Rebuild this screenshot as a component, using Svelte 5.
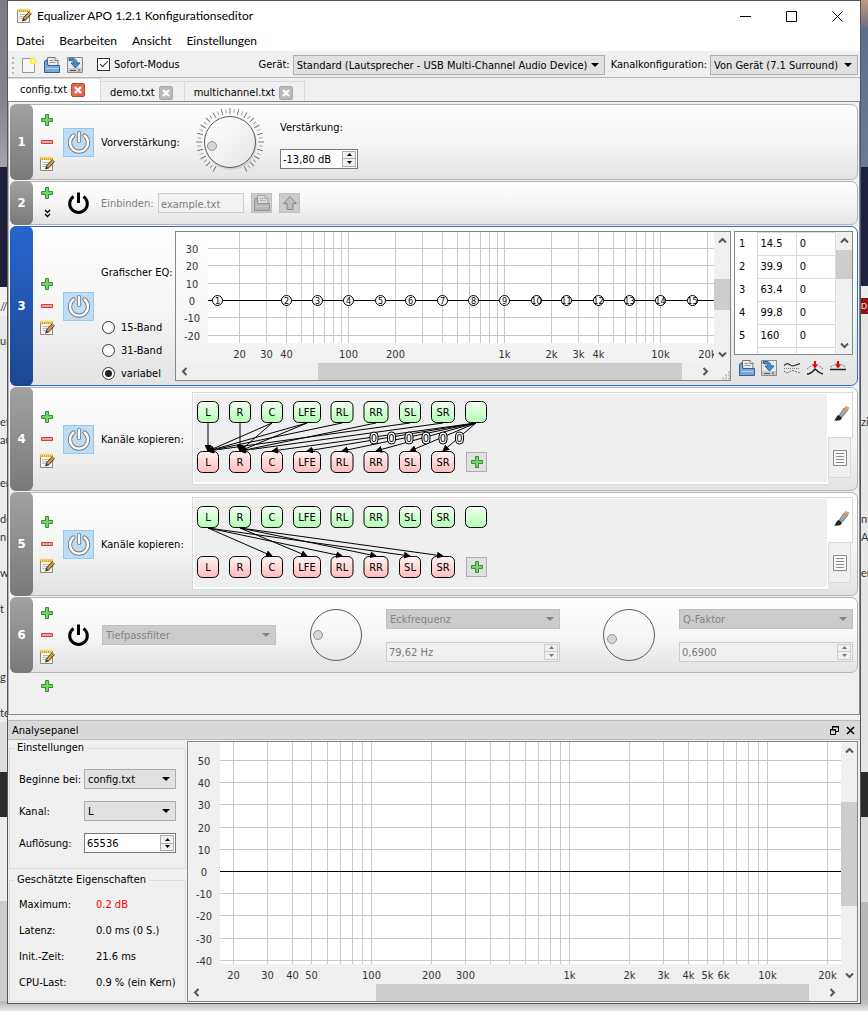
<script>
  const leftStrip = [
    { h: 167, bg: 'linear-gradient(#7c7a84, #85838d 60%, #a4a4ac)' },
    { h: 120, bg: '#1f2039' },
    { h: 11, bg: '#f1f1f1' },
    { h: 18, bg: '#f1f1f1', text: '//' },
    { h: 16, bg: '#e8e8e8' },
    { h: 18, bg: '#e8e8e8', text: 'ur' },
    { h: 63, bg: '#ececec' },
    { h: 18, bg: '#ececec', text: 'ef' },
    { h: 18, bg: '#ececec', text: 'au' },
    { h: 25, bg: '#ececec' },
    { h: 18, bg: '#ececec', text: 'er' },
    { h: 18, bg: '#ececec' },
    { h: 18, bg: '#ececec', text: 'de' },
    { h: 18, bg: '#ececec', text: 'n s' },
    { h: 18, bg: '#ececec' },
    { h: 18, bg: '#ececec', text: 'w' },
    { h: 18, bg: '#ececec' },
    { h: 18, bg: '#ececec', text: 't s' },
    { h: 50, bg: '#ececec' },
    { h: 18, bg: '#ececec', text: 'g b' },
    { h: 18, bg: '#ececec' },
    { h: 18, bg: '#ececec', text: 'te' },
    { h: 50, bg: '#dedede' },
    { h: 45, bg: '#2b2b2b' },
    { h: 84, bg: '#ececec' },
    { h: 100, bg: '#cdcdcd' },
  ];

  const rightStrip = [
    { h: 28, bg: 'linear-gradient(#c09a80, #6b6f86)' },
    { h: 139, bg: 'linear-gradient(#5b6f8c, #6a7c93)' },
    { h: 119, bg: '#1f2140' },
    { h: 12, bg: '#ececec' },
    { h: 16, bg: '#8c1414', text: 'D', light: true },
    { h: 99, bg: '#e6e6e6' },
    { h: 18, bg: '#e8e8e8', text: 'zi' },
    { h: 79, bg: '#e8e8e8' },
    { h: 18, bg: '#e8e8e8', text: 'nt' },
    { h: 18, bg: '#e8e8e8', text: 'A' },
    { h: 18, bg: '#e8e8e8' },
    { h: 18, bg: '#e8e8e8', text: 'ere' },
    { h: 190, bg: '#e4e4e4' },
    { h: 45, bg: '#2b2b2b' },
    { h: 85, bg: '#dadada' },
    { h: 98, bg: '#b9b9b9' },
  ];

  const menus = ['Datei', 'Bearbeiten', 'Ansicht', 'Einstellungen'];
  const tabs = ['config.txt', 'demo.txt', 'multichannel.txt'];
  let activeTab = 'config.txt';
  let instantMode = true;
  let bandMode = 'variabel';

  const bands = [14.5, 39.9, 63.4, 99.8, 160, 250, 400, 630, 1000, 1600, 2500, 4000, 6300, 10000, 16000];

  const eqChart = {
    x100: 172,
    decade: 156,
    zero: 68,
    perTen: 17.4,
    plotHeight: 111,
    height: 131,
    levels: [30, 20, 10, 0, -10, -20],
    labels: [20, 30, 40, 100, 200, 1000, 2000, 3000, 4000, 10000, 20000],
  };

  const analysisChart = {
    x100: 183,
    decade: 198,
    zero: 129,
    perTen: 22.2,
    plotHeight: 222,
    height: 242,
    levels: [50, 40, 30, 20, 10, 0, -10, -20, -30, -40],
    labels: [20, 30, 40, 50, 100, 200, 300, 1000, 2000, 3000, 4000, 5000, 6000, 10000, 20000],
  };

  const gridFrequencies = [10, 100, 1000, 10000]
    .flatMap((base) => [1, 2, 3, 4, 5, 6, 7, 8, 9].map((n) => n * base))
    .filter((f) => f >= 20 && f <= 20000);

  function freqX(chart, f) {
    return Math.round(chart.x100 + chart.decade * Math.log10(f / 100)) + 0.5;
  }

  function levelY(chart, level) {
    return Math.round(chart.zero - (level / 10) * chart.perTen) + 0.5;
  }

  function freqLabel(f) {
    return f >= 1000 ? `${f / 1000}k` : `${f}`;
  }

  const channels = [
    { name: 'L', x: 14, w: 22 },
    { name: 'R', x: 46, w: 22 },
    { name: 'C', x: 78, w: 22 },
    { name: 'LFE', x: 113, w: 28 },
    { name: 'RL', x: 148, w: 23 },
    { name: 'RR', x: 182, w: 25 },
    { name: 'SL', x: 216, w: 22 },
    { name: 'SR', x: 249, w: 24 },
    { name: '', x: 282, w: 22 },
  ];

  // pairs of [source, target] indexes into channels
  const downmix = [
    [0, 0], [1, 1], [2, 0], [2, 1], [3, 0], [3, 1], [4, 0], [5, 1], [6, 0], [7, 1],
    [8, 2], [8, 3], [8, 4], [8, 5], [8, 6], [8, 7],
  ];
  const upmix = [[0, 2], [0, 4], [0, 6], [1, 3], [1, 5], [1, 7]];

  const ticks = Array.from({ length: 41 }, (_, i) => ({ angle: i * 7.5 - 150, long: i % 2 === 0 }));

  const properties = [
    { label: 'Maximum:', value: '0.2 dB', alert: true },
    { label: 'Latenz:', value: '0.0 ms (0 S.)' },
    { label: 'Init.-Zeit:', value: '21.6 ms' },
    { label: 'CPU-Last:', value: '0.9 % (ein Kern)' },
  ];
</script>

{#snippet plusIcon()}
  <svg width="12" height="12" viewBox="0 0 12 12">
    <path d="M4.500 .5h3v4h4v3h-4v4h-3v-4h-4v-3h4z" fill="#7ccf6c" stroke="#2d932d" />
  </svg>
{/snippet}

{#snippet minusIcon()}
  <svg width="12" height="12" viewBox="0 0 12 12">
    <path d="M.5 4.500h11v3h-11z" fill="#ee9f98" stroke="#c4453f" />
  </svg>
{/snippet}

{#snippet editIcon()}
  <svg width="16" height="16" viewBox="0 0 16 16">
    <path d="M1.500 3.500h12v11h-12z" fill="#f6f4ee" stroke="#8b8b85" />
    <path d="M1 1.500h13v2.500h-13z" fill="#d8ab25" />
    <path d="M2.500 .5v3M4.500 .5v3M6.500 .5v3M8.500 .5v3M10.500 .5v3M12.500 .5v3" stroke="#f5df6a" />
    <path d="M3.500 6.500h8M3.500 8.500h6M3.500 10.500h4" stroke="#bcbcb8" />
    <path d="M14.500 4.500l-6.500 7" stroke="#4b2f12" stroke-width="3.600" />
    <path d="M14.500 4.500l-6 6.500" stroke="#d9a052" stroke-width="2" />
    <path d="M6 13.500l1-3 2.200 2z" fill="#2b2b2b" />
  </svg>
{/snippet}

{#snippet openIcon(muted)}
  <svg width="18" height="16" viewBox="0 0 18 16" class:muted>
    <path d="M4.500 12V.5h7.500l3 3V12" fill="#ececec" stroke="#777" />
    <path d="M6.500 3.500h4M6.500 5.500h6" stroke="#999" />
    <path d="M12 .5v3h3" fill="#fff" stroke="#777" />
    <path d="M1.500 15.500V4.500l1-1.500h1.500l1 5.500h11.500v7z" fill="#79a8d6" stroke="#33618f" />
    <path d="M3 11.500h12.500" stroke="#b4d3ee" />
  </svg>
{/snippet}

{#snippet saveIcon()}
  <svg width="16" height="16" viewBox="0 0 16 16">
    <path d="M.5 .5h15v15h-15z" fill="#e9e9e9" stroke="#8b8b8b" />
    <path d="M1 11h14v4h-14z" fill="#c9c9c9" />
    <path d="M3 13.500h6M12 12v2.500" stroke="#555" />
    <path d="M2 1.500c4-.5 8 .5 8 4.500h3l-4.500 5-4.500-5h3c0-2-2-2.500-5-2.500z" fill="#4f8fc6" stroke="#235e92" />
  </svg>
{/snippet}

{#snippet closeBadge()}
  <svg width="14" height="14" viewBox="0 0 14 14">
    <rect class="badge" x=".5" y=".5" width="13" height="13" rx="1.500" />
    <path d="M4 4l6 6M10 4l-6 6" stroke="#fff" stroke-width="2.400" />
  </svg>
{/snippet}

{#snippet power(on)}
  <button class="power" class:on aria-label="Filter ein/aus" aria-pressed={on}>
    <svg width="24" height="24" viewBox="0 0 24 24" fill="none" stroke-linecap={on ? 'round' : 'butt'}>
      {#if on}
        <path d="M6.500 5.500a9 9 0 1 0 11 0M12 3v8" stroke="#6d7780" stroke-width="4.200" />
        <path d="M6.500 5.500a9 9 0 1 0 11 0M12 3v8" stroke="#fff" stroke-width="2.400" />
      {:else}
        <path d="M6.500 5.500a8.800 8.800 0 1 0 10 0M11.500 1.500v10.500" stroke="#000" stroke-width="3" />
      {/if}
    </svg>
  </button>
{/snippet}

{#snippet tools()}
  <div class="tools">
    <button aria-label="Filter hinzufügen">{@render plusIcon()}</button>
    <button aria-label="Filter entfernen">{@render minusIcon()}</button>
    <button aria-label="Als Text bearbeiten">{@render editIcon()}</button>
  </div>
{/snippet}

{#snippet combo(text, label, kind, disabled)}
  <span class="combo {kind}" class:disabled>
    <select aria-label={label} {disabled}><option>{text}</option></select>
    <svg width="8" height="4" viewBox="0 0 8 4"><path d="M0 0h8l-4 4z" fill="currentColor" /></svg>
  </span>
{/snippet}

{#snippet spin(text, label, kind, disabled)}
  <span class="spin {kind}" class:disabled>
    <input type="text" value={text} aria-label={label} {disabled} />
    <span class="steps">
      <button aria-label="{label} erhöhen" {disabled}><svg width="5" height="3" viewBox="0 0 5 3"><path d="M2.500 0L5 3H0z" fill="currentColor" /></svg></button>
      <button aria-label="{label} verringern" {disabled}><svg width="5" height="3" viewBox="0 0 5 3"><path d="M2.500 3L5 0H0z" fill="currentColor" /></svg></button>
    </span>
  </span>
{/snippet}

{#snippet dial(label, knobX, knobY, notched)}
  <span class="dial">
    <svg width="68" height="68" viewBox="0 0 68 68">
      <defs>
        <linearGradient id="dial-face" x1="0" y1="0" x2="1" y2="1">
          <stop offset="0" stop-color="#fff" />
          <stop offset="1" stop-color="#e6e6e6" />
        </linearGradient>
      </defs>
      {#if notched}
        {#each ticks as tick}
          <path d={tick.long ? 'M34 6V0' : 'M34 5V1'} stroke={tick.long ? '#7a7a7a' : '#a2a2a2'} transform="rotate({tick.angle} 34 34)" />
        {/each}
        <circle cx="35" cy="36" r="26" fill="#c4c4c4" opacity=".6" />
      {/if}
      <circle cx="34" cy="34" r="25.500" fill={notched ? 'url(#dial-face)' : 'none'} stroke="#5a5a5a" />
      <circle cx={knobX} cy={knobY} r="4.500" fill="#d6d6d6" stroke="#929292" />
    </svg>
    <input type="range" aria-label={label} disabled={!notched} />
  </span>
{/snippet}

{#snippet arrow(direction)}
  <svg class="arrow {direction}" width="9" height="9" viewBox="0 0 9 9">
    <path d="M1 6.500l3.500-3.500 3.500 3.500" fill="none" stroke="#555" stroke-width="2" />
  </svg>
{/snippet}

{#snippet scrollbar(axis, before, thumb, after)}
  <div class="scrollbar {axis}">
    <button aria-label="Zurück scrollen">{@render arrow(axis === 'vertical' ? 'up' : 'left')}</button>
    <span style:flex-grow={before}></span>
    <span class="thumb" style:flex-grow={thumb}></span>
    <span style:flex-grow={after}></span>
    <button aria-label="Weiter scrollen">{@render arrow(axis === 'vertical' ? 'down' : 'right')}</button>
  </div>
{/snippet}

{#snippet plot(chart, points)}
  <svg class="plot" width="100%" height={chart.height}>
    <rect x="32" y="0" width="100%" height={chart.plotHeight} fill="#fff" />
    <g stroke="#c8c8c8" shape-rendering="crispEdges">
      {#each gridFrequencies as f}
        <line x1={freqX(chart, f)} x2={freqX(chart, f)} y1="0" y2={chart.plotHeight} />
      {/each}
      {#each chart.levels as level}
        <line x1="32" x2="100%" y1={levelY(chart, level)} y2={levelY(chart, level)} />
      {/each}
      <line x1="32" x2="100%" y1={levelY(chart, 0)} y2={levelY(chart, 0)} stroke="#000" />
    </g>
    <g fill="#333" text-anchor="middle">
      {#each chart.levels as level}
        <text x="16" y={levelY(chart, level) + 4}>{level}</text>
      {/each}
      {#each chart.labels as f}
        <text x={freqX(chart, f)} y={chart.plotHeight + 15}>{freqLabel(f)}</text>
      {/each}
    </g>
    {#each points as f, i}
      <circle cx={freqX(chart, f)} cy={levelY(chart, 0)} r="5" fill="#fff" stroke="#000" />
      <text class="point" x={freqX(chart, f)} y={levelY(chart, 0) + 3} text-anchor="middle">{i + 1}</text>
    {/each}
  </svg>
{/snippet}

{#snippet router(routes)}
  <div class="router">
    <div class="canvas">
      <svg width="100%" height="88">
        <defs>
          <linearGradient id="node-in" x2="0" y2="1">
            <stop offset="0" stop-color="#f4fff4" />
            <stop offset="1" stop-color="#b2ffb2" />
          </linearGradient>
          <linearGradient id="node-out" x2="0" y2="1">
            <stop offset="0" stop-color="#fff4f4" />
            <stop offset="1" stop-color="#ffbcbc" />
          </linearGradient>
          <marker id="arrowhead" viewBox="0 0 7 7" refX="6" refY="3.500" markerWidth="7" markerHeight="7" orient="auto">
            <path d="M0 0l7 3.500-7 3.500z" />
          </marker>
        </defs>
        {#each channels as channel}
          <rect x={channel.x - channel.w / 2 + 0.5} y="7.500" width={channel.w - 1} height="21" rx="5" fill="url(#node-in)" stroke="#000" />
          <text x={channel.x} y="22" text-anchor="middle">{channel.name}</text>
          {#if channel.name}
            <rect x={channel.x - channel.w / 2 + 0.5} y="57.500" width={channel.w - 1} height="21" rx="5" fill="url(#node-out)" stroke="#000" />
            <text x={channel.x} y="72" text-anchor="middle">{channel.name}</text>
          {/if}
        {/each}
        {#each routes as [from, to]}
          <line x1={channels[from].x} y1="29" x2={channels[to].x} y2="57" stroke="#000" marker-end="url(#arrowhead)" />
        {/each}
        {#each routes.filter(([from]) => from === 8) as [from, to]}
          {@const x = (channels[from].x + channels[to].x) / 2}
          <rect x={x - 4} y="38" width="8" height="12" rx="4" fill="#fff" stroke="#000" />
          <text {x} y="48" text-anchor="middle">0</text>
        {/each}
      </svg>
      <button class="add-channel" aria-label="Kanal hinzufügen">{@render plusIcon()}</button>
    </div>
    <div class="modes">
      <button class="current" aria-label="Grafische Ansicht">
        <svg width="16" height="16" viewBox="0 0 16 16">
          <path d="M0 14.500c2-1 2-5 5-5.500l3 2.500c-.5 3-4 3.500-8 3z" fill="#222" />
          <path d="M5.500 8.500l4.500-6.500 4 2-5.500 7z" fill="#a4a8ac" stroke="#555" stroke-width=".6" />
          <path d="M10 2.500l1.500-2.500 4 1.500-1.500 3z" fill="#dba06a" />
        </svg>
      </button>
      <button aria-label="Textansicht">
        <svg width="14" height="16" viewBox="0 0 14 16">
          <path d="M.5 .5h13v15h-13z" fill="#fafafa" stroke="#888" />
          <path d="M3 3.500h8M3 6.500h8M3 9.500h8M3 12.500h8" stroke="#888" />
        </svg>
      </button>
    </div>
  </div>
{/snippet}

<div class="desktop">
  <div class="strip left" aria-hidden="true">
    {#each leftStrip as part}
      <span style:height="{part.h}px" style:background={part.bg}>{part.text ?? ''}</span>
    {/each}
  </div>

  <main class="window">
    <header class="titlebar">
      {@render editIcon()}
      <h1>Equalizer APO 1.2.1 Konfigurationseditor</h1>
      <button aria-label="Minimieren"><svg width="11" height="11"><path d="M0 5.500h11" stroke="#000" /></svg></button>
      <button aria-label="Maximieren"><svg width="11" height="11"><path d="M.5 .5h10v10H.5z" fill="none" stroke="#000" /></svg></button>
      <button aria-label="Schließen"><svg width="11" height="11"><path d="M.5 .5l10 10M10.500 .5l-10 10" stroke="#000" /></svg></button>
    </header>

    <nav class="menubar">
      {#each menus as menu}
        <button>{menu}</button>
      {/each}
    </nav>

    <div class="toolbar">
      <svg class="grip" width="3" height="20"><path d="M1 2v18" stroke="#bbb" stroke-width="2" stroke-dasharray="2 3" /></svg>
      <button aria-label="Neu">
        <svg width="16" height="16" viewBox="0 0 16 16">
          <path d="M1.500 1.500h12v14h-12z" fill="#f7f7f5" stroke="#999" />
          <circle cx="12" cy="4" r="3.500" fill="#f8ee4e" />
          <circle cx="12" cy="4" r="1.500" fill="#fffbb8" />
        </svg>
      </button>
      <button aria-label="Öffnen">{@render openIcon(false)}</button>
      <button aria-label="Speichern">{@render saveIcon()}</button>
      <label class="instant"><input type="checkbox" bind:checked={instantMode} />Sofort-Modus</label>
      <span class="device-label">Gerät:</span>
      {@render combo('Standard (Lautsprecher - USB Multi-Channel Audio Device)', 'Gerät', 'device', false)}
      <span class="layout-label">Kanalkonfiguration:</span>
      {@render combo('Von Gerät (7.1 Surround)', 'Kanalkonfiguration', 'layout', false)}
    </div>

    <div class="tabs">
      {#each tabs as tab}
        <div class="tab" class:active={tab === activeTab}>
          <button on:click={() => (activeTab = tab)}>{tab}</button>
          <button aria-label="{tab} schließen">{@render closeBadge()}</button>
        </div>
      {/each}
    </div>

    <div class="filters">
      <section class="filter medium">
        <b class="number">1</b>
        {@render tools()}
        {@render power(true)}
        <div class="body">
          <span class="gain-name">Vorverstärkung:</span>
          {@render dial('Verstärkung', 16, 38, true)}
          <div class="gain">
            <span>Verstärkung:</span>
            {@render spin('-13,80 dB', 'Verstärkung', 'narrow', false)}
          </div>
        </div>
      </section>

      <section class="filter small">
        <b class="number">2</b>
        <div class="tools">
          <button aria-label="Filter hinzufügen">{@render plusIcon()}</button>
          <button aria-label="Mehr">
            <svg width="7" height="9" viewBox="0 0 7 9"><path d="M1 1l2.500 2.500L6 1M1 5l2.500 2.500L6 5" fill="none" stroke="#000" stroke-width="1.400" /></svg>
          </button>
        </div>
        {@render power(false)}
        <div class="body dim">
          <label class="include-name" for="include">Einbinden:</label>
          <input id="include" class="include" type="text" value="example.txt" disabled />
          <button class="file-button" aria-label="Datei wählen" disabled>{@render openIcon(true)}</button>
          <button class="file-button" aria-label="Datei öffnen" disabled>
            <svg width="16" height="16" viewBox="0 0 16 16"><path d="M8 1.500l6.500 7h-3.500v6h-6v-6h-3.500z" fill="#bcbcbc" stroke="#868686" /></svg>
          </button>
        </div>
      </section>

      <section class="filter large selected">
        <b class="number">3</b>
        {@render tools()}
        {@render power(true)}
        <div class="body">
          <div class="band-modes">
            <span class="eq-name">Grafischer EQ:</span>
            {#each ['15-Band', '31-Band', 'variabel'] as mode}
              <label><input type="radio" name="bands" value={mode} bind:group={bandMode} />{mode}</label>
            {/each}
          </div>
          <div class="chart eq">
            {@render plot(eqChart, bands)}
            {@render scrollbar('vertical', 30, 30, 36)}
            {@render scrollbar('horizontal', 124, 363, 15)}
            <svg class="size-grip" width="9" height="9"><path d="M1 7.500h8M4 4.500h5M7 1.500h2" stroke="#bbb" stroke-width="2" stroke-dasharray="2 1" /></svg>
          </div>
          <div class="band-side">
            <div class="band-list">
              <div class="band-view">
                <table>
                  <tbody>
                    {#each bands.slice(0, 5) as band, i}
                      <tr><th scope="row">{i + 1}</th><td>{band}</td><td>0</td></tr>
                    {/each}
                    <tr><th scope="row"></th><td></td><td></td></tr>
                  </tbody>
                </table>
              </div>
              {@render scrollbar('vertical', 1, 30, 61)}
            </div>
            <div class="band-actions">
              <button aria-label="Importieren">{@render openIcon(false)}</button>
              <button aria-label="Exportieren">{@render saveIcon()}</button>
              <button aria-label="Invertieren">
                <svg width="16" height="14" viewBox="0 0 16 14" fill="none">
                  <path d="M0 4.500q3-3 5.500-1t5 1 5.500-2" stroke="#333" stroke-width="1.200" />
                  <path d="M0 7.500h16" stroke="#777" stroke-dasharray="1 1" />
                  <path d="M0 10q3 3 5.500 1t5-1 5.500 2" stroke="#666" stroke-dasharray="2 1" />
                </svg>
              </button>
              <button aria-label="Normalisieren">
                <svg width="16" height="14" viewBox="0 0 16 14" fill="none">
                  <path d="M0 8l8-6 8 6" stroke="#777" stroke-dasharray="2 1" />
                  <path d="M0 13q4 0 8-5 4 4 8 5" stroke="#222" stroke-width="1.500" />
                  <path d="M8 0v4" stroke="#e00" stroke-width="2" /><path d="M5 3.500h6l-3 4z" fill="#e00" />
                </svg>
              </button>
              <button aria-label="Zurücksetzen">
                <svg width="16" height="14" viewBox="0 0 16 14" fill="none">
                  <path d="M0 6l8-4 8 4" stroke="#777" stroke-dasharray="2 1" />
                  <path d="M0 8.500h16" stroke="#222" stroke-width="1.500" />
                  <path d="M8 0v4" stroke="#e00" stroke-width="2" /><path d="M5 3.500h6l-3 4z" fill="#e00" />
                </svg>
              </button>
            </div>
          </div>
        </div>
      </section>

      {#each [downmix, upmix] as routes, i}
        <section class="filter copy">
          <b class="number">{i + 4}</b>
          {@render tools()}
          {@render power(true)}
          <div class="body">
            <span class="copy-name">Kanäle kopieren:</span>
            {@render router(routes)}
          </div>
        </section>
      {/each}

      <section class="filter medium">
        <b class="number">6</b>
        {@render tools()}
        {@render power(false)}
        <div class="body biquad">
          {@render combo('Tiefpassfilter', 'Filtertyp', 'wide', true)}
          {@render dial('Eckfrequenz', 16, 34, false)}
          <div class="pair">
            {@render combo('Eckfrequenz', 'Frequenzart', 'wide', true)}
            {@render spin('79,62 Hz', 'Frequenz', 'wide', true)}
          </div>
          {@render dial('Q-Faktor', 17, 38, false)}
          <div class="pair">
            {@render combo('Q-Faktor', 'Güteart', 'wide', true)}
            {@render spin('0,6900', 'Güte', 'wide', true)}
          </div>
        </div>
      </section>

      <button class="append" aria-label="Filter anhängen">{@render plusIcon()}</button>
    </div>

    <section class="dock">
      <header>
        <h2>Analysepanel</h2>
        <button aria-label="Lösen">
          <svg width="9" height="9" viewBox="0 0 9 9" fill="none" stroke="#000"><path d="M2.500 3V.5h6v5H6M2 1h7M.5 3.500h5v5h-5zM0 4h6" /></svg>
        </button>
        <button aria-label="Panel schließen">
          <svg width="9" height="9" viewBox="0 0 9 9"><path d="M1 1l7 7M8 1L1 8" stroke="#000" stroke-width="1.600" /></svg>
        </button>
      </header>
      <div class="dock-body">
        <div class="panel">
          <fieldset>
            <legend>Einstellungen</legend>
            <div class="form">
              <span>Beginne bei:</span>{@render combo('config.txt', 'Beginne bei', 'fill', false)}
              <span>Kanal:</span>{@render combo('L', 'Kanal', 'fill', false)}
              <span>Auflösung:</span>{@render spin('65536', 'Auflösung', 'fill', false)}
            </div>
          </fieldset>
          <fieldset>
            <legend>Geschätzte Eigenschaften</legend>
            <dl>
              {#each properties as property}
                <dt>{property.label}</dt>
                <dd class:alert={property.alert}>{property.value}</dd>
              {/each}
            </dl>
          </fieldset>
        </div>
        <div class="chart analysis">
          {@render plot(analysisChart, [])}
          {@render scrollbar('vertical', 43, 104, 61)}
          {@render scrollbar('horizontal', 171, 433, 15)}
        </div>
      </div>
    </section>
  </main>

  <div class="strip right" aria-hidden="true">
    {#each rightStrip as part}
      <span class:light={part.light} style:height="{part.h}px" style:background={part.bg}>{part.text ?? ''}</span>
    {/each}
  </div>
</div>

<style>
  :global(body) {
    margin: 0;
    background: #dcdcdc;
  }

  .desktop {
    display: grid;
    grid-template-columns: 7px minmax(0, 1fr) 7px;
    box-sizing: border-box;
    min-height: 100vh;
    font: 11px/14px 'DejaVu Sans Condensed', 'Noto Sans', sans-serif;
    color: #000;
    background: linear-gradient(to top, #e8e8e8, #bdbdbd 8px);
  }

  .strip {
    display: flex;
    flex-direction: column;
    height: 1011px;
    overflow: hidden;
    font: 11px/18px Lato, sans-serif;
    color: #333;
  }

  .strip span {
    display: flex;
    flex: none;
    align-items: center;
    overflow: hidden;
    white-space: nowrap;
  }

  .strip .light {
    color: #fff;
    font-size: 8px;
  }

  button,
  input,
  select {
    box-sizing: border-box;
    margin: 0;
    padding: 0;
    border: 0;
    border-radius: 0;
    background: none;
    font: inherit;
    color: inherit;
  }

  svg {
    display: block;
    flex: none;
  }

  h1,
  h2 {
    margin: 0;
    font: inherit;
  }

  .window {
    display: flex;
    flex-direction: column;
    margin-bottom: 7px;
    border: 1px solid #55555f;
    background: #f0f0f0;
  }

  .titlebar {
    display: flex;
    align-items: center;
    height: 30px;
    padding-left: 8px;
    background: #fff;
    font: 12px/16px Lato, 'Open Sans', sans-serif;
  }

  .titlebar h1 {
    flex: 1;
    padding-left: 5px;
    white-space: nowrap;
  }

  .titlebar button {
    display: flex;
    align-items: center;
    justify-content: center;
    width: 46px;
    height: 30px;
  }

  .menubar {
    display: flex;
    gap: 15px;
    height: 20px;
    padding-left: 8px;
    border-bottom: 1px solid #eee;
    background: #fff;
    font: 12px/20px Lato, 'Open Sans', sans-serif;
  }

  .toolbar {
    display: flex;
    align-items: center;
    height: 25px;
    padding: 0 2px 0 4px;
    border-bottom: 1px solid #b5b5b5;
    white-space: nowrap;
  }

  .toolbar button {
    display: flex;
    justify-content: center;
    width: 23px;
  }

  .grip {
    margin-right: 2px;
  }

  .instant {
    display: flex;
    align-items: center;
    gap: 4px;
    margin-left: 11px;
  }

  input[type='checkbox'],
  input[type='radio'] {
    display: grid;
    place-items: center;
    width: 13px;
    height: 13px;
    border: 1px solid #333;
    background: #fff;
    appearance: none;
  }

  input[type='checkbox']:checked::after {
    content: '';
    width: 7px;
    height: 3px;
    margin-bottom: 3px;
    border: solid #222;
    border-width: 0 0 1px 1px;
    transform: rotate(-45deg);
  }

  input[type='radio'] {
    border-radius: 50%;
  }

  input[type='radio']:checked::after {
    content: '';
    width: 7px;
    height: 7px;
    border-radius: 50%;
    background: #222;
  }

  .device-label {
    margin-left: auto;
    padding-right: 3px;
  }

  .layout-label {
    padding: 0 3px 0 6px;
  }

  .combo {
    display: grid;
    align-items: center;
    box-sizing: border-box;
    height: 20px;
    border: 1px solid #adadad;
    background: #e1e1e1;
  }

  .combo select {
    grid-area: 1 / 1;
    width: 100%;
    height: 18px;
    padding: 2px 14px 0 3px;
    appearance: none;
    opacity: 1;
  }

  .combo svg {
    grid-area: 1 / 1;
    justify-self: end;
    margin-right: 5px;
    pointer-events: none;
  }

  .combo.disabled {
    border-color: #bfbfbf;
    background: #ccc;
    color: #838383;
  }

  .combo.device {
    flex: 0 1 312px;
  }

  .combo.layout {
    flex: 0 1 148px;
  }

  .spin {
    display: flex;
    box-sizing: border-box;
    height: 20px;
    padding: 1px;
    border: 1px solid #7a7a7a;
    background: #fff;
  }

  .spin input {
    flex: 1;
    min-width: 0;
    padding: 2px 0 0 1px;
  }

  .spin.narrow {
    width: 78px;
  }

  .steps {
    display: flex;
    flex-direction: column;
    width: 14px;
  }

  .steps button {
    display: flex;
    flex: 1;
    align-items: center;
    justify-content: center;
    border: 1px solid #adadad;
    background: #f0f0f0;
  }

  .steps button + button {
    border-top: 0;
  }

  .spin.disabled {
    border-color: #ccc;
    background: #f0f0f0;
    color: #777;
  }

  .disabled .steps button {
    border-color: #ccc;
  }

  .tabs {
    display: flex;
    align-items: flex-end;
    height: 23px;
  }

  .tab {
    display: flex;
    align-items: center;
    gap: 4px;
    height: 20px;
    padding: 2px 11px 0 9px;
    box-sizing: border-box;
    border: 1px solid #d9d9d9;
    border-width: 1px 1px 0 0;
  }

  .tab.active {
    height: 23px;
    padding: 0 15px 0 12px;
    background: #fff;
  }

  .badge {
    fill: #b9b9b9;
    stroke: #a8a8a8;
  }

  .active .badge {
    fill: #dd6a50;
    stroke: #c84830;
  }

  .filters {
    display: flex;
    flex: 1;
    flex-direction: column;
    gap: 1px;
    padding: 2px 1px 0;
    border: 1px solid #828790;
    border-left-color: #b5b5b5;
  }

  .filter {
    display: flex;
    align-items: center;
    box-sizing: border-box;
    padding-right: 4px;
    border: 1px solid #b4b4b4;
    border-radius: 7px;
    background: linear-gradient(#fff, #f6f6f6 50%, #e3e3e3);
  }

  .filter.small {
    min-height: 44px;
  }

  .filter.medium {
    min-height: 76px;
  }

  .filter.large {
    min-height: 160px;
  }

  .filter.copy {
    min-height: 104px;
  }

  .number {
    display: flex;
    align-items: center;
    align-self: stretch;
    justify-content: center;
    width: 23px;
    margin: -1px 0 -1px -1px;
    border-radius: 6px;
    background: linear-gradient(#a2a2a2, #797979);
    color: #fff;
    font-size: 13px;
  }

  .filter.selected {
    border-color: #2d6cd2;
  }

  .selected .number {
    background: linear-gradient(#2866cd, #1c4791);
  }

  .tools {
    display: flex;
    flex-direction: column;
    width: 28px;
  }

  .tools button {
    display: flex;
    align-items: center;
    justify-content: center;
    height: 22px;
  }

  .small .tools button {
    height: 21px;
  }

  .power {
    display: flex;
    flex: none;
    align-items: center;
    justify-content: center;
    width: 31px;
    height: 29px;
    margin: 0 7px 0 2px;
    border: 1px solid transparent;
  }

  .power.on {
    border-color: #90c8f6;
    background: #c0dcf3;
  }

  .body {
    display: flex;
    flex: 1;
    align-items: center;
    min-width: 0;
    white-space: nowrap;
  }

  .gain-name,
  .include-name,
  .copy-name {
    padding-top: 2px;
  }

  .gain-name {
    width: 95px;
  }

  .dial {
    display: grid;
    flex: none;
    width: 68px;
  }

  .dial > * {
    grid-area: 1 / 1;
  }

  .dial input {
    width: 68px;
    opacity: 0;
  }

  .gain {
    display: flex;
    flex-direction: column;
    gap: 14px;
    margin-left: 16px;
    padding-top: 5px;
  }

  .dim {
    color: #7d7d7d;
  }

  .include-name {
    width: 57px;
  }

  .include {
    width: 86px;
    height: 20px;
    padding: 2px 0 0 2px;
    border: 1px solid #ccc;
    background: #f2f2f2;
  }

  .file-button {
    display: flex;
    align-items: center;
    justify-content: center;
    width: 21px;
    height: 20px;
    margin-left: 7px;
    border: 1px solid #bfbfbf;
    background: #ccc;
  }

  .muted {
    filter: grayscale(1);
    opacity: 0.5;
  }

  .large .body {
    align-self: stretch;
  }

  .band-modes {
    display: flex;
    flex-direction: column;
    align-self: flex-end;
    width: 74px;
    line-height: 23px;
  }

  .eq-name {
    margin-bottom: 32px;
  }

  .band-modes label {
    display: flex;
    align-items: center;
    gap: 6px;
    padding-left: 1px;
  }

  .chart {
    display: grid;
    flex: 1;
    grid-template-columns: minmax(0, 1fr) 16px;
    min-width: 0;
    border: 1px solid #828790;
  }

  .chart.eq {
    grid-template-rows: 131px 17px;
    background: linear-gradient(#fff, #f0f0f0);
  }

  .chart.analysis {
    grid-template-rows: 242px 17px;
  }

  .plot .point {
    font-size: 9px;
  }

  .size-grip {
    place-self: end;
  }

  .scrollbar {
    display: flex;
    background: #f0f0f0;
  }

  .scrollbar.vertical {
    flex-direction: column;
    width: 16px;
  }

  .scrollbar button {
    display: flex;
    align-items: center;
    justify-content: center;
    width: 17px;
    height: 17px;
  }

  .scrollbar .thumb {
    background: #cdcdcd;
  }

  .arrow.left {
    transform: rotate(-90deg);
  }

  .arrow.right {
    transform: rotate(90deg);
  }

  .arrow.down {
    transform: rotate(180deg);
  }

  .band-side {
    display: flex;
    flex-direction: column;
    width: 119px;
    margin-left: 3px;
  }

  .band-list {
    display: flex;
    height: 122px;
    border: 1px solid #828790;
    background: #fff;
  }

  .band-view {
    flex: 1;
    overflow: hidden;
  }

  table {
    width: 100%;
    border-collapse: collapse;
    table-layout: fixed;
  }

  th,
  td {
    box-sizing: border-box;
    height: 23px;
    padding: 0 3px;
    border: 1px solid #dcdcdc;
    font-weight: normal;
    text-align: left;
  }

  th {
    width: 22px;
    border-width: 0 1px 0 0;
    padding: 0 4px;
  }

  .band-actions {
    display: flex;
    align-items: center;
    gap: 5px;
    height: 26px;
    padding-left: 4px;
  }

  .band-actions button {
    display: flex;
    width: 18px;
  }

  .copy .body {
    padding: 4px 0 5px;
  }

  .copy-name {
    width: 91px;
  }

  .router {
    display: flex;
    flex: 1;
    align-items: flex-start;
    min-width: 0;
  }

  .canvas {
    position: relative;
    flex: 1;
    min-width: 0;
    padding: 1px 1px 2px;
    border: 1px solid #d9d9d9;
    border-right: 0;
    background: #fff;
  }

  .canvas > svg {
    background: #efefef;
  }

  .add-channel {
    position: absolute;
    top: 59px;
    left: 273px;
    display: flex;
    align-items: center;
    justify-content: center;
    width: 21px;
    height: 20px;
    border: 1px solid #adadad;
    background: #e1e1e1;
  }

  .modes {
    display: flex;
    flex-direction: column;
    width: 25px;
  }

  .modes button {
    display: flex;
    align-items: center;
    justify-content: center;
    width: 23px;
    height: 40px;
    border: 1px solid #d9d9d9;
    border-top: 0;
    background: #f0f0f0;
  }

  .modes .current {
    width: 25px;
    height: 46px;
    padding: 0 0 3px 3px;
    border-top: 1px solid #d9d9d9;
    border-left: 0;
    background: #fff;
  }

  .biquad {
    padding-left: 1px;
  }

  .biquad > .combo {
    margin-right: 26px;
  }

  .combo.wide,
  .spin.wide {
    width: 174px;
  }

  .pair {
    display: flex;
    flex-direction: column;
    gap: 13px;
    margin: 0 35px 0 16px;
  }

  .pair:last-child {
    margin-right: 0;
  }

  .append {
    align-self: flex-start;
    margin: 6px 31px 22px;
  }

  .dock {
    display: flex;
    flex-direction: column;
    margin-top: 5px;
  }

  .dock header {
    display: flex;
    align-items: center;
    gap: 7px;
    height: 18px;
    padding: 0 5px 0 4px;
    border: solid #bbb;
    border-width: 1px 0;
    background: #d9d9d9;
  }

  .dock h2 {
    flex: 1;
    padding-top: 2px;
  }

  .dock-body {
    display: flex;
    gap: 1px;
    padding: 1px 2px 1px 1px;
  }

  .panel {
    display: flex;
    flex-direction: column;
    justify-content: space-between;
    width: 177px;
  }

  fieldset {
    min-width: 0;
    margin: 0;
    padding: 0 9px;
    border: 1px solid #dcdcdc;
  }

  legend {
    margin-left: -4px;
    padding: 0 3px 0 2px;
  }

  .form {
    display: grid;
    grid-template-columns: 65px minmax(0, 1fr);
    align-items: center;
    row-gap: 12px;
    padding: 14px 0 15px;
    white-space: nowrap;
  }

  .form > span:nth-child(odd) {
    padding-top: 2px;
  }

  dl {
    display: grid;
    grid-template-columns: 77px minmax(0, 1fr);
    row-gap: 12px;
    margin: 0;
    padding: 11px 0;
    white-space: nowrap;
  }

  dd {
    margin: 0;
  }

  .alert {
    color: #f00;
  }
</style>
